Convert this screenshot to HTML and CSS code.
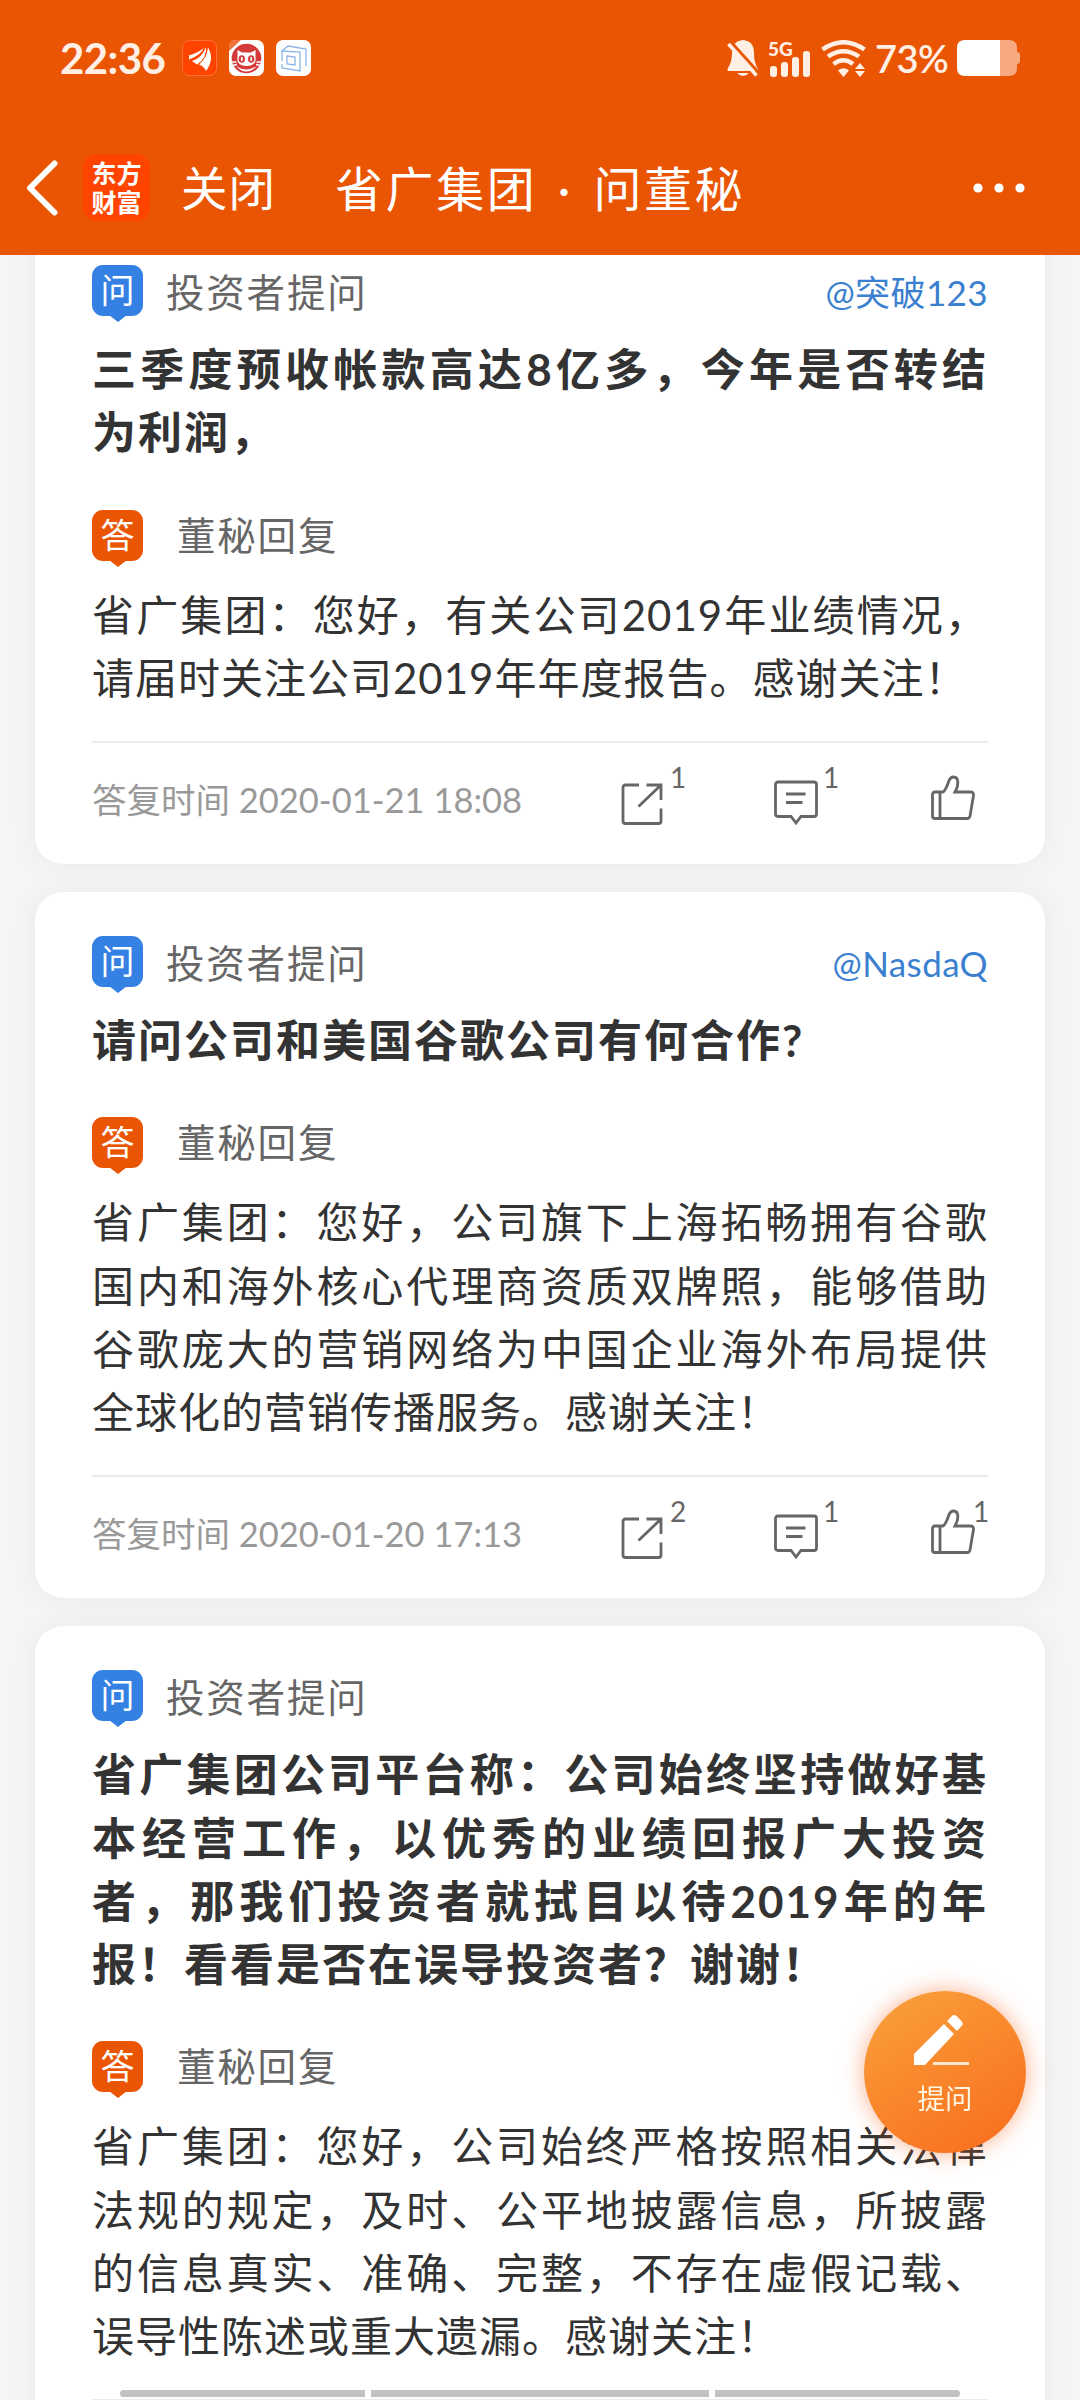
FILE: index.html
```html
<!DOCTYPE html>
<html lang="zh-CN">
  <head>
    <meta charset="UTF-8" />
    <meta name="viewport" content="width=device-width, initial-scale=1.0" />
    <title>省广集团 · 问董秘</title>
    <link rel="stylesheet" href="styles.css">
  </head>
  <body>
    <!-- Shared icons -->
    <svg class="sprite" xmlns="http://www.w3.org/2000/svg">
      <symbol id="icon-share" viewBox="0 0 42 42">
        <path d="M18 2H4.500Q2 2 2 4.500V38Q2 40.500 4.500 40.500H37.500Q40 40.500 40 38V25.500M25.500 2H40V17M39.500 2.500L17.500 23.500" />
      </symbol>
      <symbol id="icon-comment" viewBox="0 0 44 46">
        <path d="M4 2H40Q42.500 2 42.500 4.500V34Q42.500 36.500 40 36.500H27L22 43L17 36.500H4Q1.500 36.500 1.500 34V4.500Q1.500 2 4 2ZM12 14H31.500M12 22.500H28.500" />
      </symbol>
      <symbol id="icon-like" viewBox="0 0 44 46">
        <path d="M9 17H4Q1.500 17 1.500 19.500V41Q1.500 43.500 4 43.500H36Q38.500 43.500 39 41L42.500 20.500Q42.800 17 39.500 17H24C28 10 28 2 22.500 2C19.500 2 18.500 4 17.500 7C16 12 13 17 12 17H9V43.500" />
      </symbol>
    </svg>

    <header class="header">
      <div class="status-bar">
        <span class="clock">22:36</span>
        <div class="app-icons">
          <svg width="35" height="36" viewBox="0 0 35 36">
            <rect x="0.500" y="0.500" width="34" height="35" rx="7" fill="#ff4400" stroke="#ff7038" />
            <path d="M7 15.500Q16 13 22 8Q19 15 7 19.500ZM10 21Q20 18 24 7Q25 18 15 24.500ZM17 24.500Q25 18 26 7.500Q33 19 24 31Q22 26 17 24.500Z" fill="#fff" />
          </svg>
          <svg width="35" height="36" viewBox="0 0 35 36">
            <rect width="35" height="36" rx="7" fill="#fff" />
            <path d="M0 7Q0 0 7 0H12L0 11Z" fill="#f0703a" />
            <circle cx="17.500" cy="18.500" r="14.800" fill="#d43a3a" />
            <path d="M8.500 10L13 12.500H22L26.500 10V17Q28 26 17.500 26Q7 26 8.500 17Z" fill="#fff" />
            <ellipse cx="12.800" cy="19" rx="3.200" ry="3.800" fill="#d43a3a" />
            <ellipse cx="22.200" cy="19" rx="3.200" ry="3.800" fill="#d43a3a" />
            <ellipse cx="12.800" cy="19" rx="1" ry="2.200" fill="#fff" />
            <ellipse cx="22.200" cy="19" rx="1" ry="2.200" fill="#fff" />
            <path d="M3 22H7.500M3 25.500L8 24.500M32 22H27.500M32 25.500L27 24.500" fill="none" stroke="#fff" stroke-width="1.300" />
            <path d="M7 26Q17 33 28 26Q17 37 7 26Z" fill="#fff" />
          </svg>
          <svg width="35" height="36" viewBox="0 0 35 36">
            <rect width="35" height="36" rx="7" fill="#fff" />
            <path d="M6 21V11L24 12V31L6 28V24M6 11L12 6L30 9V26M11 16L19 17V25L11 24Z" fill="none" stroke="#8db5e6" stroke-width="1.300" />
          </svg>
        </div>
        <div class="status-right">
          <svg width="32" height="37" viewBox="0 0 32 37">
            <path d="M16 0Q27 1 27 13Q27 23 31 29V31H1Q0 30 1 28Q5 22 5 13Q5 1 16 0ZM10 33H22Q16 39 10 33Z" fill="#ffefe4" />
            <path d="M3 1L33 34" stroke="#ea5504" stroke-width="3" />
            <path d="M1.500 4L29.500 35.500" stroke="#ffefe4" stroke-width="3.500" />
          </svg>
          <div class="signal">
            <span class="signal-label">5G</span>
            <svg width="42" height="26" viewBox="0 0 42 26">
              <g fill="#ffefe4">
                <rect x="1" y="15" width="7" height="11" rx="3" />
                <rect x="12" y="11" width="7" height="15" rx="3" />
                <rect x="23" y="6" width="7" height="20" rx="3" />
                <rect x="34" y="0" width="7" height="26" rx="3" />
              </g>
            </svg>
          </div>
          <svg class="wifi" width="45" height="37" viewBox="0 0 45 37">
            <path d="M1.500 9.500Q22.500 -5 43.500 9.500M7 16.500Q22.500 6 38 16.500M12.500 24Q22.500 16.500 32 24" fill="none" stroke="#ffefe4" stroke-width="4.500" />
            <path d="M17 30.500Q22.500 26 28 30.500L22.500 37ZM34 29L39 23L44 29ZM34 31L39 37L44 31Z" fill="#ffefe4" />
          </svg>
          <span class="percent">73%</span>
          <svg width="63" height="36" viewBox="0 0 63 36">
            <path d="M43 0H52Q60 0 60 8V12Q63 12 63 15V21Q63 24 60 24V28Q60 36 52 36H43Z" fill="#f7a982" />
            <path d="M8 0H43V36H8Q0 36 0 28V8Q0 0 8 0Z" fill="#fff" />
          </svg>
        </div>
      </div>

      <nav class="nav">
        <svg class="back" width="34" height="58" viewBox="0 0 34 58">
          <path d="M28.500 4.500L4 29L28.500 53.500" fill="none" stroke="#fff" stroke-width="6" stroke-linecap="round" stroke-linejoin="round" />
        </svg>
        <div class="logo"><span>东方</span><span>财富</span></div>
        <span class="close">关闭</span>
        <h1 class="nav-title">省广集团<span class="dot">·</span>问董秘</h1>
        <svg class="more" width="52" height="10" viewBox="0 0 52 10">
          <g fill="#fff">
            <circle cx="5" cy="5" r="4.600" />
            <circle cx="26" cy="5" r="4.600" />
            <circle cx="47" cy="5" r="4.600" />
          </g>
        </svg>
      </nav>
    </header>

    <main class="list">
      <article class="card">
        <div class="row ask">
          <span class="badge">问</span>
          <span class="label">投资者提问</span>
          <a class="user">@突破123</a>
        </div>
        <h2 class="question">三季度预收帐款高达8亿多，今年是否转结为利润，</h2>
        <div class="row reply">
          <span class="badge">答</span>
          <span class="label">董秘回复</span>
        </div>
        <p class="answer">省广集团：您好，有关公司2019年业绩情况，请届时关注公司2019年年度报告。感谢关注！</p>
        <footer class="card-footer">
          <time class="time">答复时间 2020-01-21 18:08</time>
          <span class="action share"><svg><use href="#icon-share" /></svg><sup>1</sup></span>
          <span class="action comment"><svg><use href="#icon-comment" /></svg><sup>1</sup></span>
          <span class="action like"><svg><use href="#icon-like" /></svg></span>
        </footer>
      </article>

      <article class="card">
        <div class="row ask">
          <span class="badge">问</span>
          <span class="label">投资者提问</span>
          <a class="user">@NasdaQ</a>
        </div>
        <h2 class="question">请问公司和美国谷歌公司有何合作?</h2>
        <div class="row reply">
          <span class="badge">答</span>
          <span class="label">董秘回复</span>
        </div>
        <p class="answer">省广集团：您好，公司旗下上海拓畅拥有谷歌国内和海外核心代理商资质双牌照，能够借助谷歌庞大的营销网络为中国企业海外布局提供全球化的营销传播服务。感谢关注！</p>
        <footer class="card-footer">
          <time class="time">答复时间 2020-01-20 17:13</time>
          <span class="action share"><svg><use href="#icon-share" /></svg><sup>2</sup></span>
          <span class="action comment"><svg><use href="#icon-comment" /></svg><sup>1</sup></span>
          <span class="action like"><svg><use href="#icon-like" /></svg><sup>1</sup></span>
        </footer>
      </article>

      <article class="card">
        <div class="row ask">
          <span class="badge">问</span>
          <span class="label">投资者提问</span>
        </div>
        <h2 class="question">省广集团公司平台称：公司始终坚持做好基本经营工作，以优秀的业绩回报广大投资者，那我们投资者就拭目以待2019年的年报！看看是否在误导投资者？谢谢！</h2>
        <div class="row reply">
          <span class="badge">答</span>
          <span class="label">董秘回复</span>
        </div>
        <p class="answer">省广集团：您好，公司始终严格按照相关法律法规的规定，及时、公平地披露信息，所披露的信息真实、准确、完整，不存在虚假记载、误导性陈述或重大遗漏。感谢关注！</p>
        <footer class="card-footer"></footer>
      </article>
    </main>

    <!-- Floating ask button -->
    <button class="fab">
      <svg width="58" height="52" viewBox="0 0 58 52">
        <path d="M2 51V40L32 10L42 20L13 51ZM35 7L40 2Q42 0 44.500 2L49.500 7Q52 10 49.500 12L45 17Z" fill="#fff" />
        <path d="M21 49.500H57" stroke="#ffe6cc" stroke-width="3" />
      </svg>
      <span>提问</span>
    </button>

    <!-- Gesture bar -->
    <div class="gesture-bar"><i></i><i></i><i></i></div>
  </body>
</html>
```

FILE: styles.css
```css
* {
  box-sizing: border-box;
}

body {
  margin: 0;
  height: 2400px;
  overflow: hidden;
  background-color: #f5f5f5;
  font-family: Lato, "Noto Sans CJK SC", sans-serif;
  color: #333;
}

.sprite {
  display: none;
}

/* Header */
.header {
  position: relative;
  z-index: 2;
  height: 255px;
  background-color: #ea5504;
  color: #fff;
}

.status-bar {
  display: flex;
  align-items: center;
  height: 116px;
  padding: 0 60px;
  color: #ffefe4;
}

.clock {
  width: 122px;
  font-size: 42px;
  font-weight: bold;
  letter-spacing: -0.6px;
  line-height: 1;
}

.app-icons {
  display: flex;
  gap: 12px;
}

.status-right {
  display: flex;
  align-items: center;
  margin-left: auto;
}

.signal {
  display: flex;
  flex-direction: column;
  position: relative;
  width: 42px;
  height: 38px;
  margin: 0 10px;
  justify-content: flex-end;
}

.signal-label {
  position: absolute;
  top: 0;
  left: -1px;
  font-size: 19px;
  font-weight: 900;
  line-height: 19px;
}

.percent {
  width: 91px;
  padding-left: 9px;
  font-size: 38px;
  font-weight: 600;
  letter-spacing: -0.5px;
  line-height: 1;
  white-space: nowrap;
}

.nav {
  display: flex;
  align-items: center;
  height: 135px;
  margin-top: 4px;
  padding: 0 55px 0 26px;
}

.back {
  margin-right: 23px;
}

.logo {
  display: flex;
  flex-direction: column;
  justify-content: center;
  align-items: center;
  width: 67px;
  height: 67px;
  border-radius: 14px;
  background-color: #ff4400;
  font-size: 25px;
  font-weight: bold;
  line-height: 29px;
}

.close {
  margin-left: 31px;
  padding-top: 2px;
  font-size: 46.5px;
  letter-spacing: 1px;
  line-height: 1;
}

.nav-title {
  margin: 0 0 0 59px;
  padding-top: 2px;
  font-size: 48px;
  font-weight: normal;
  letter-spacing: 2.6px;
  line-height: 1;
}

.dot {
  display: inline-block;
  width: 56px;
  text-align: center;
}

.more {
  margin-left: auto;
}

/* Question cards */
.list {
  display: flex;
  flex-direction: column;
  gap: 28px;
  height: 2179px;
  margin-top: -34px;
  padding: 0 35px;
  overflow: hidden;
}

.card {
  flex: none;
  padding: 44px 57px 0;
  border-radius: 28px;
  background-color: #fff;
  box-shadow: 0 0 28px rgba(0, 0, 0, 0.05);
}

.row {
  display: flex;
  height: 73px;
  line-height: 54px;
}

.reply {
  height: 74px;
  margin-top: 45px;
  line-height: 50px;
}

.badge {
  position: relative;
  width: 51px;
  height: 51px;
  border-radius: 11px;
  background-color: #3580e3;
  color: #fff;
  font-size: 34px;
  line-height: 50px;
  text-align: center;
}

.badge::after {
  content: "";
  position: absolute;
  left: 17px;
  top: 50px;
  border: 9px solid transparent;
  border-top: 7px solid #3580e3;
  border-bottom: 0;
}

.reply .badge {
  background-color: #ea5504;
}

.reply .badge::after {
  border-top-color: #ea5504;
}

.label {
  margin-left: 23px;
  color: #666;
  font-size: 38.5px;
  letter-spacing: 1.8px;
}

.reply .label {
  margin-left: 34px;
}

.user {
  margin-left: auto;
  color: #3b7fd0;
  font-size: 35px;
  letter-spacing: 0.4px;
}

.question,
.answer {
  margin: 0;
  line-height: 63.25px;
  text-align: justify;
}

.question {
  font-size: 44px;
  font-weight: bold;
  letter-spacing: 2px;
}

.answer {
  font-size: 42px;
  letter-spacing: 1px;
}

.card-footer {
  display: flex;
  height: 123px;
  margin-top: 31px;
  border-top: 2px solid #ececec;
}

.time {
  flex: none;
  width: 529px;
  color: #999;
  font-size: 34.5px;
  line-height: 114px;
}

.action {
  display: flex;
  flex: none;
  color: #666;
}

.action svg {
  width: 44px;
  height: 46px;
  fill: none;
  stroke: #666;
  stroke-width: 2.8;
}

.action sup {
  margin-top: 20px;
  font-size: 28px;
  line-height: 28px;
}

.share {
  width: 153px;
}

.share svg {
  width: 42px;
  height: 42px;
  margin: 40px 7px 0 0;
}

.comment {
  width: 157px;
}

.comment svg {
  margin: 37px 5px 0 0;
}

.like {
  width: 57px;
}

.like svg {
  flex: none;
  margin-top: 32px;
}

.like sup {
  margin-left: -2px;
}

/* Floating button */
.fab {
  position: fixed;
  left: 864px;
  top: 1991px;
  z-index: 3;
  display: flex;
  flex-direction: column;
  align-items: center;
  width: 162px;
  height: 162px;
  padding: 23px 0 0;
  border: 0;
  border-radius: 50%;
  background: linear-gradient(150deg, #f9a23c, #f96b1c);
  box-shadow: 0 0 22px rgba(249, 100, 30, 0.5);
  color: #fff5e0;
  font: 27.5px/40px Lato, "Noto Sans CJK SC", sans-serif;
}

.fab svg {
  margin-right: 8px;
}

.fab span {
  margin-top: 13px;
}

.gesture-bar {
  position: fixed;
  left: 120px;
  top: 2390px;
  z-index: 3;
  display: grid;
  grid-template-columns: 245px 338px 245px;
  gap: 6px;
  height: 7px;
}

.gesture-bar i {
  background-color: #c2c2c2;
}

.gesture-bar i:first-child {
  border-radius: 4px 0 0 4px;
}

.gesture-bar i:last-child {
  border-radius: 0 4px 4px 0;
}
```
